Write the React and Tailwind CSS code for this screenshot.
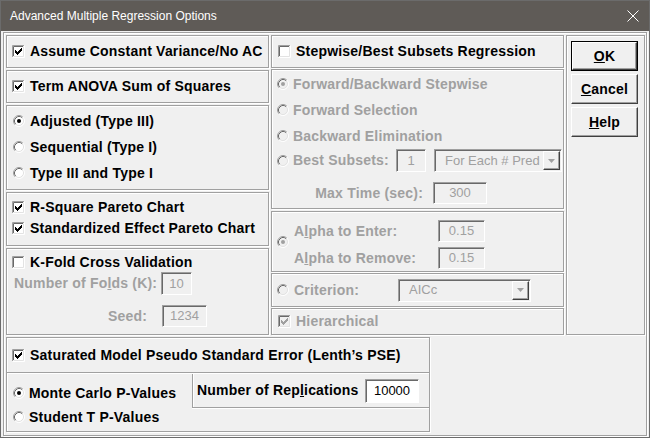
import React from 'react'

const font = "font-['Liberation_Sans',Arial,sans-serif]"
const etched = 'border border-[#a0a0a0] shadow-[inset_1px_1px_0_#fff,1px_1px_0_#fff]'
const sunken = 'border border-t-[#a0a0a0] border-l-[#a0a0a0] border-r-white border-b-white shadow-[inset_1px_1px_0_#696969]'
const raised = 'border border-t-white border-l-white border-r-[#404040] border-b-[#404040] shadow-[inset_-1px_-1px_0_#a0a0a0]'

// classic 7x7 check glyph
const CHECK = [
  [6, 0], [5, 1], [6, 1], [0, 2], [4, 2], [5, 2], [6, 2], [0, 3], [1, 3], [3, 3], [4, 3], [5, 3],
  [0, 4], [1, 4], [2, 4], [3, 4], [4, 4], [1, 5], [2, 5], [3, 5], [2, 6],
]

function CheckBox({ checked, disabled }) {
  return (
    <svg width="13" height="13" viewBox="0 0 13 13" className="shrink-0">
      <rect x="1" y="1" width="11" height="11" fill={disabled ? '#f0f0f0' : '#fff'} />
      <path d="M0.5 12 V0.5 H12" stroke="#a0a0a0" fill="none" />
      <path d="M1.5 11 V1.5 H11" stroke="#696969" fill="none" />
      <path d="M0.5 12.5 H12.5 V0.5" stroke="#fff" fill="none" />
      <path d="M1.5 11.5 H11.5 V1.5" stroke="#e3e3e3" fill="none" />
      {checked && CHECK.map(([x, y]) => (
        <rect key={`${x}-${y}`} x={x + 3} y={y + 3} width="1" height="1" fill={disabled ? '#a0a0a0' : '#000'} />
      ))}
    </svg>
  )
}

function Radio({ checked, disabled }) {
  return (
    <svg width="12" height="12" viewBox="0 0 12 12" className="shrink-0">
      <circle cx="6" cy="6" r="5" fill={disabled ? '#f0f0f0' : '#fff'} />
      <path d="M2.11 9.89 A5.5 5.5 0 0 1 9.89 2.11" stroke="#a0a0a0" fill="none" />
      <path d="M2.82 9.18 A4.5 4.5 0 0 1 9.18 2.82" stroke="#696969" fill="none" />
      <path d="M9.89 2.11 A5.5 5.5 0 0 1 2.11 9.89" stroke="#fff" fill="none" />
      <path d="M9.18 2.82 A4.5 4.5 0 0 1 2.82 9.18" stroke="#e3e3e3" fill="none" />
      {checked && <circle cx="6" cy="6" r="2" fill={disabled ? '#a0a0a0' : '#000'} />}
    </svg>
  )
}

function Field({ value, className, disabled = true }) {
  return (
    <div
      className={`${sunken} ${className} ${disabled ? 'bg-[#f0f0f0] text-[#a0a0a0]' : 'bg-white text-black'} flex items-center justify-center text-[13px] font-normal tracking-normal shrink-0`}
    >
      {value}
    </div>
  )
}

function Combo({ value, className }) {
  return (
    <div className={`${sunken} ${className} bg-[#f0f0f0] flex items-center shrink-0 p-[1px]`}>
      <span className="flex-1 pl-[9px] text-[13px] font-normal tracking-normal text-[#a0a0a0] whitespace-nowrap">{value}</span>
      <div className={`${raised} w-[17px] h-full bg-[#f0f0f0] flex items-center justify-center`}>
        <svg width="7" height="4" viewBox="0 0 7 4">
          <path d="M0 0 H7 L3.5 4 Z" fill="#a0a0a0" />
        </svg>
      </div>
    </div>
  )
}

function Button({ children, isDefault }) {
  const inner = (
    <div className={`${raised} h-full w-full flex items-center justify-center text-[14px] font-bold`}>
      {children}
    </div>
  )
  return isDefault ? (
    <div className="w-[67px] h-[30px] border border-black">{inner}</div>
  ) : (
    <div className="w-[67px] h-[30px]">{inner}</div>
  )
}

export default function App() {
  return (
    <div className={`w-[650px] h-[438px] bg-[#f0f0f0] border border-[#6b6b6b] flex flex-col ${font} text-black`}>
      {/* title bar */}
      <div className="h-[30px] shrink-0 bg-[#5f5b57] flex items-center justify-between pl-[9px] pr-[10px]">
        <span className="text-white text-[12px]">Advanced Multiple Regression Options</span>
        <svg width="12" height="12" viewBox="0 0 12 12">
          <path d="M0.5 0.5 L11.5 11.5 M11.5 0.5 L0.5 11.5" stroke="#fff" strokeWidth="1" />
        </svg>
      </div>

      <div className="flex-1 px-[2px] py-[1px]">
        <div className={`h-full ${etched} pl-[2px] pt-[2px] font-bold text-[14px] tracking-[0.2px]`}>
          <div className="flex gap-[2px] h-[300px]">
            {/* left column */}
            <div className="w-[263px] flex flex-col gap-[2px]">
              <div className={`${etched} h-[33px] flex items-center pl-[5px] gap-[5px]`}>
                <CheckBox checked />
                <span>Assume Constant Variance/No AC</span>
              </div>
              <div className={`${etched} h-[33px] flex items-center pl-[5px] gap-[5px]`}>
                <CheckBox checked />
                <span>Term ANOVA Sum of Squares</span>
              </div>
              <div className={`${etched} h-[85px] flex flex-col pt-[2px] pl-[6px]`}>
                <div className="h-[26px] flex items-center gap-[5px]"><Radio checked /><span>Adjusted (Type III)</span></div>
                <div className="h-[26px] flex items-center gap-[5px]"><Radio /><span>Sequential (Type I)</span></div>
                <div className="h-[26px] flex items-center gap-[5px]"><Radio /><span>Type III and Type I</span></div>
              </div>
              <div className={`${etched} h-[54px] flex flex-col pt-[4px] pl-[5px]`}>
                <div className="h-[21px] flex items-center gap-[5px]"><CheckBox checked /><span>R-Square Pareto Chart</span></div>
                <div className="h-[21px] flex items-center gap-[5px]"><CheckBox checked /><span>Standardized Effect Pareto Chart</span></div>
              </div>
              <div className={`${etched} h-[87px] flex flex-col pt-[3px] pl-[5px]`}>
                <div className="h-[20px] flex items-center gap-[5px]"><CheckBox /><span>K-Fold Cross Validation</span></div>
                <div className="h-[23px] flex items-center pl-[2px] text-[#a0a0a0]">
                  <span className="w-[147px]">Number of Fo<u>l</u>ds (K):</span>
                  <Field value="10" className="w-[31px] h-[23px]" />
                </div>
                <div className="h-[22px] mt-[10px] flex items-center pl-[2px] text-[#a0a0a0]">
                  <span className="w-[148px] text-right pr-[15px]">Seed:</span>
                  <Field value="1234" className="w-[45px] h-[22px]" />
                </div>
              </div>
            </div>

            {/* middle column */}
            <div className="w-[293px] flex flex-col">
              <div className={`${etched} h-[33px] flex items-center pl-[6px] gap-[5px]`}>
                <CheckBox />
                <span>Stepwise/Best Subsets Regression</span>
              </div>
              <div className={`${etched} h-[140px] mt-[1px] flex flex-col pt-[1px] pl-[5px] text-[#a0a0a0]`}>
                <div className="h-[26px] flex items-center gap-[4px]"><Radio checked disabled /><span>Forward/Backward Stepwise</span></div>
                <div className="h-[26px] flex items-center gap-[4px]"><Radio disabled /><span>Forward Selection</span></div>
                <div className="h-[26px] flex items-center gap-[4px]"><Radio disabled /><span>Backward Elimination</span></div>
                <div className="h-[23px] flex items-center gap-[4px]">
                  <Radio disabled />
                  <span className="w-[99px]">Best Subsets:</span>
                  <Field value="1" className="w-[30px] h-[23px]" />
                  <Combo value="For Each # Pred" className="w-[128px] h-[23px] ml-[4px]" />
                </div>
                <div className="h-[22px] mt-[10px] flex items-center">
                  <span className="w-[156px] text-right pr-[10px]">Max Time (sec):</span>
                  <Field value="300" className="w-[54px] h-[22px]" />
                </div>
              </div>
              <div className={`${etched} h-[61px] mt-[2px] flex items-start pl-[5px] text-[#a0a0a0]`}>
                <div className="mt-[24px]"><Radio checked disabled /></div>
                <div className="flex flex-col gap-[5px] pt-[8px] pl-[5px]">
                  <div className="h-[22px] flex items-center">
                    <span className="w-[144px]">A<u>l</u>pha to Enter:</span>
                    <Field value="0.15" className="w-[47px] h-[22px]" />
                  </div>
                  <div className="h-[22px] flex items-center">
                    <span className="w-[144px]">A<u>l</u>pha to Remove:</span>
                    <Field value="0.15" className="w-[47px] h-[22px]" />
                  </div>
                </div>
              </div>
              <div className={`${etched} h-[34px] mt-[1px] flex items-center pl-[5px] gap-[5px] text-[#a0a0a0]`}>
                <Radio disabled />
                <span className="w-[99px]">Criterion:</span>
                <Combo value="AICc" className="w-[133px] h-[23px]" />
              </div>
              <div className={`${etched} h-[27px] mt-[1px] flex items-center pl-[6px] gap-[5px] text-[#a0a0a0]`}>
                <CheckBox checked disabled />
                <span>Hierarchical</span>
              </div>
            </div>

            {/* buttons */}
            <div className={`${etched} w-[79px] h-full flex flex-col gap-[3px] pt-[5px] pl-[4px]`}>
              <Button isDefault><span><u>O</u>K</span></Button>
              <Button><span><u>C</u>ancel</span></Button>
              <Button><span><u>H</u>elp</span></Button>
            </div>
          </div>

          {/* bottom group */}
          <div className={`${etched} w-[424px] h-[95px] mt-[2px] flex flex-col`}>
            <div className="h-[34px] flex items-center pl-[5px] gap-[5px]">
              <CheckBox checked />
              <span>Saturated Model Pseudo Standard Error (Lenth’s PSE)</span>
            </div>
            <div className="h-px bg-[#a0a0a0] shadow-[0_1px_0_#fff]" />
            <div className="flex-1 flex">
              <div className="flex flex-col pt-[8px] pl-[6px]">
                <div className="h-[24px] flex items-center gap-[4px]"><Radio checked /><span>Monte Carlo P-Values</span></div>
                <div className="h-[24px] flex items-center gap-[4px]"><Radio /><span>Student T P-Values</span></div>
              </div>
              <div className="ml-auto self-start w-[237px] h-[34px] border-l border-b border-[#a0a0a0] shadow-[inset_1px_0_0_#fff,0_1px_0_#fff] flex items-center pl-[4px] mt-[1px]">
                <span className="w-[168px]">Number of Rep<u>l</u>ications</span>
                <Field value="10000" disabled={false} className="w-[54px] h-[24px]" />
              </div>
            </div>
          </div>
        </div>
      </div>
    </div>
  )
}
